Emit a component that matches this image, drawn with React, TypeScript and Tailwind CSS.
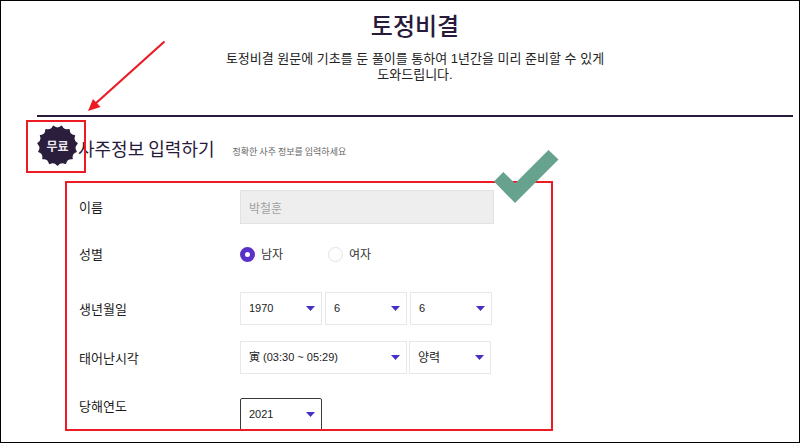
import { ReactNode } from "react";

const LATIN_KR = "font-['Liberation_Sans','Noto_Sans_CJK_KR',sans-serif]";

// ---- Drawings ---------------------------------------------------------------

// Scalloped star: sharp teeth joined by curves that dip towards the centre
function starPath(teeth: number, outer: number, dip: number): string {
  const at = (r: number, step: number) => {
    const a = (Math.PI * step) / teeth - Math.PI / 2;
    return `${(20.5 + r * Math.cos(a)).toFixed(2)} ${(20.5 + r * Math.sin(a)).toFixed(2)}`;
  };
  let d = `M${at(outer, 1)}`;
  for (let i = 1; i < teeth * 2; i += 2) {
    d += `Q${at(dip, i + 1)} ${at(outer, i + 2)}`;
  }
  return d + "Z";
}

function FreeBadge() {
  return (
    <div className="relative flex h-[41px] w-[41px] shrink-0 items-center justify-center">
      <svg viewBox="0 0 41 41" className="absolute inset-0" aria-hidden="true">
        <path
          d={starPath(15, 19.6, 15.6)}
          fill="#2a1e3c"
          stroke="#2a1e3c"
          strokeWidth="1.4"
          strokeLinejoin="round"
        />
      </svg>
      <span className="relative text-[12px] leading-4 font-bold text-[#eceaf0]">무료</span>
      <span className="absolute -top-[5px] -right-2 -bottom-[7px] -left-[11px] z-10 border-2 border-[#ed1c24]" />
    </div>
  );
}

function Arrow() {
  return (
    <svg
      viewBox="0 0 80 72"
      className="pointer-events-none absolute top-[39px] left-[86px] h-[72px] w-20"
      aria-hidden="true"
    >
      <path d="M77.5 1.5 8 64" stroke="#ed1c24" strokeWidth="2.2" fill="none" />
      <path d="M1 71 6 59 13.5 67Z" fill="#ed1c24" />
    </svg>
  );
}

function CheckMark() {
  return (
    <svg
      viewBox="0 0 66 54"
      className="pointer-events-none absolute -top-8 -right-[7px] z-10 h-[54px] w-[66px]"
      aria-hidden="true"
    >
      <path d="M0 32.5 9.3 23 21 34.5 54.5 1 64.5 10.5 21 54Z" fill="#67a28e" />
    </svg>
  );
}

// ---- Form parts -------------------------------------------------------------

function Row({
  label,
  htmlFor,
  className,
  children,
}: {
  label: string;
  htmlFor?: string;
  className: string;
  children: ReactNode;
}) {
  return (
    <div className={`flex ${className}`}>
      <label htmlFor={htmlFor} className="w-[161px] shrink-0 text-[13px] leading-4 text-[#1c1c1c]">
        {label}
      </label>
      <div className="flex flex-1">{children}</div>
    </div>
  );
}

function Select({
  id,
  label,
  options,
  wide,
  active,
  korean,
}: {
  id: string;
  label: string;
  options: string[];
  wide?: boolean;
  active?: boolean;
  korean?: boolean;
}) {
  return (
    <div className={`relative h-[33px] ${wide ? "w-[167px]" : "w-[82px]"}`}>
      <select
        id={id}
        aria-label={label}
        className={`h-full w-full appearance-none border bg-white pl-2 text-[#222] outline-none ${LATIN_KR} ${
          korean ? "text-[12px]" : "text-[11px]"
        } ${active ? "rounded-xs border-[#3a3a3a]" : "border-[#e8e8e8]"}`}
      >
        {options.map((o) => (
          <option key={o}>{o}</option>
        ))}
      </select>
      <svg
        viewBox="0 0 9 5"
        className="pointer-events-none absolute top-3.5 right-[7px] h-[5px] w-[9px]"
        aria-hidden="true"
      >
        <path d="M0 0H9L4.5 5Z" fill="#4330c4" />
      </svg>
    </div>
  );
}

function Radio({ label, checked }: { label: string; checked?: boolean }) {
  return (
    <label className="flex w-[88px] items-center gap-1.5 text-[12px] text-[#333]">
      <input
        type="radio"
        name="gender"
        defaultChecked={checked}
        className="h-[15px] w-[15px] appearance-none rounded-full border border-[#e2e2e2] bg-white checked:border-[5px] checked:border-[#5a31c8]"
      />
      {label}
    </label>
  );
}

// ---- Page -------------------------------------------------------------------

export default function App() {
  return (
    <div className="relative overflow-hidden border border-black bg-white pb-[11px] font-['Noto_Sans_CJK_KR',sans-serif]">
      <Arrow />
      <main className="mr-1.5 ml-9">
        <header className="border-b-2 border-[#281a3a] pt-2 pb-8 text-center">
          <h1 className="text-[24px] leading-8 font-medium text-[#281a3a]">토정비결</h1>
          <p className={`mx-auto mt-2.5 max-w-[390px] text-[13px] leading-4 text-[#222] ${LATIN_KR}`}>
            토정비결 원문에 기초를 둔 풀이를 통하여 1년간을 미리 준비할 수 있게 도와드립니다.
          </p>
        </header>

        <div className="mt-2 flex items-center">
          <FreeBadge />
          <h2 className="pt-1 text-[18px] leading-6 text-[#281a3a]">사주정보 입력하기</h2>
          <p className="ml-[18px] pt-3 text-[9px] leading-4 text-[#666]">정확한 사주 정보를 입력하세요</p>
        </div>

        <div className="relative mt-[15px] ml-7 max-w-[488px]">
          <form className="h-[250px] overflow-hidden border-2 border-[#ed1c24] px-3 pt-[7px]">
            <Row label="이름" htmlFor="name" className="items-center">
              <input
                id="name"
                type="text"
                defaultValue="박철훈"
                disabled
                className="h-[34px] w-[254px] border border-[#e2e2e2] bg-[#eee] px-2 text-[12px] text-[#a0a0a0]"
              />
            </Row>
            <Row label="성별" className="mt-3.5 h-8 items-center">
              <Radio label="남자" checked />
              <Radio label="여자" />
            </Row>
            <Row label="생년월일" htmlFor="year" className="mt-[22px] items-center">
              <div className="flex gap-[3px]">
                <Select id="year" label="년" options={["1970"]} />
                <Select id="month" label="월" options={["6"]} />
                <Select id="day" label="일" options={["6"]} />
              </div>
            </Row>
            <Row label="태어난시각" htmlFor="time" className="mt-4 items-center">
              <div className="flex gap-0.5">
                <Select id="time" label="태어난시각" options={["寅 (03:30 ~ 05:29)"]} wide />
                <Select id="calendar" label="양력/음력" options={["양력"]} korean />
              </div>
            </Row>
            <Row label="당해연도" htmlFor="target" className="mt-6 items-start">
              <Select id="target" label="당해연도" options={["2021"]} active />
            </Row>
          </form>
          <CheckMark />
        </div>
      </main>
    </div>
  );
}
